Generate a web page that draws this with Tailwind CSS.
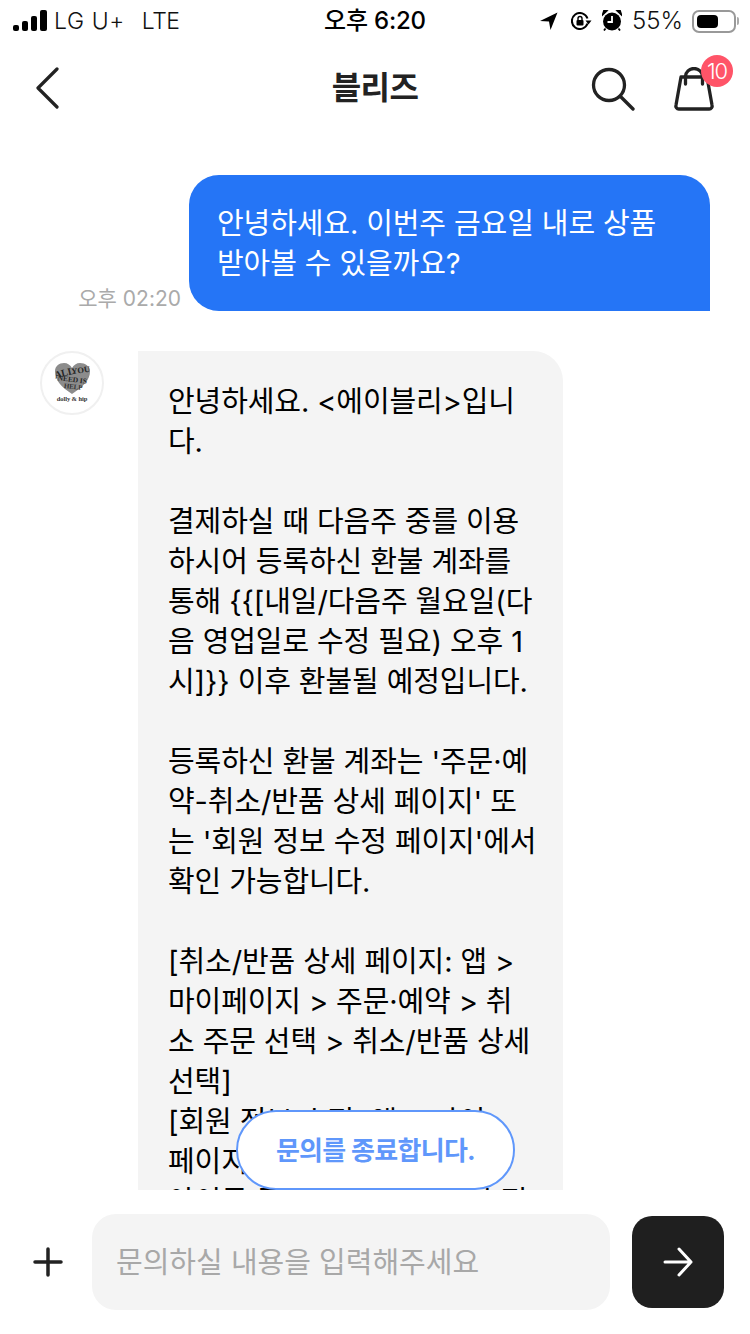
<!DOCTYPE html>
<html lang="ko">
<head>
  <meta charset="UTF-8">
  <meta name="viewport" content="width=device-width, initial-scale=1.0">
  <title>블리즈 문의</title>
  <script src="https://cdn.jsdelivr.net/npm/@tailwindcss/browser@4"></script>
</head>
<body class="bg-white font-['Inter','Noto_Sans_CJK_KR',sans-serif] text-black">
  <div class="relative w-[750px] h-[1334px] flex flex-col overflow-hidden">
    <!-- status bar -->
    <div class="h-[42px] shrink-0 relative flex items-center justify-between pl-[13px] pr-[11px] text-[24px] leading-none">
      <div class="flex items-center text-[#111]">
        <svg width="36" height="22" viewBox="0 0 36 22" fill="#000">
          <rect x="0" y="15" width="6" height="6" rx="2"/>
          <rect x="9" y="11" width="6" height="10" rx="2"/>
          <rect x="18" y="6" width="6" height="15" rx="2"/>
          <rect x="27" y="0" width="7" height="21" rx="2"/>
        </svg>
        <span class="ml-[5px] text-[23px] font-light tracking-[0.6px]">LG U+</span>
        <span class="ml-[17px] text-[23px] font-light tracking-[-0.5px]">LTE</span>
      </div>
      <div class="absolute left-[324px] top-[9px] font-medium text-[24px] tracking-[-0.2px]">오후 6:20</div>
      <div class="flex items-center">
        <svg width="18" height="18" viewBox="0 0 18 18" fill="#000"><path d="M17.500.5 0 9l9 .5 1.500 8.500z"/></svg>
        <svg class="ml-[13px]" width="21" height="18" viewBox="0 0 21 18" fill="none" stroke="#000" stroke-width="2">
          <path d="M16.500 11.500A8 8 0 1 1 16.500 6.500"/>
          <path d="M14.500 8.500h6l-3 4z" fill="#000" stroke="none"/>
          <rect x="5.500" y="8" width="7" height="5.500" rx="1" fill="#000" stroke="none"/>
          <path d="M7 8V6.500a2 2 0 0 1 4 0V8" stroke-width="1.400"/>
        </svg>
        <svg class="ml-[10px] mt-[-2px]" width="20" height="21" viewBox="0 0 20 21">
          <circle cx="10" cy="11.500" r="9" fill="#000"/>
          <path d="M10 6v6H5.500" stroke="#fff" stroke-width="1.800" fill="none"/>
          <path d="M.5 5 5 .8 2 .3zM19.500 5 15 .8l3-.5z" stroke="#000" stroke-width="1.500" fill="#000"/>
          <path d="m3.500 18.500-1.500 2M16.500 18.500l1.500 2" stroke="#000" stroke-width="1.800"/>
        </svg>
        <span class="ml-[10px] text-[24px] text-[#111] font-light">55%</span>
        <div class="ml-[9px] w-[44px] h-[23px] rounded-[7px] border-2 border-[#999] p-[3px]">
          <div class="w-[21px] h-full rounded-[4px] bg-black"></div>
        </div>
        <div class="ml-[1px] w-[2px] h-[8px] rounded-r bg-[#aaa]"></div>
      </div>
    </div>

    <!-- header -->
    <header class="h-[92px] shrink-0 relative flex items-center justify-between pl-[36px] pr-[35px]">
      <svg width="23" height="42" viewBox="0 0 23 42" fill="none" stroke="#222" stroke-width="3.200" stroke-linecap="round" stroke-linejoin="round"><path d="M21 2 2 21l19 19"/></svg>
      <div class="absolute left-0 right-0 text-center text-[32px] font-bold text-[#222] tracking-[-0.6px]">블리즈</div>
      <div class="flex items-center gap-[38px]">
        <svg class="mt-[2px]" width="44" height="44" viewBox="0 0 44 44" fill="none" stroke="#222" stroke-width="3.300" stroke-linecap="round"><circle cx="18" cy="18" r="15.500"/><path d="m29.500 29.500 12.500 12.500"/></svg>
        <div class="relative mt-[2px]">
          <svg width="42" height="44" viewBox="0 0 42 44" fill="none" stroke="#222" stroke-width="3.300" stroke-linecap="round" stroke-linejoin="round">
            <path d="M8 10h26l5 28a3 3 0 0 1-3 4H6a3 3 0 0 1-3-4z"/>
            <path d="M12.500 17V9.500a8.500 8 0 0 1 17 0V17"/>
          </svg>
          <div class="absolute left-[28px] top-[-12px] w-[32px] h-[32px] rounded-full bg-[#ff5468] text-white text-[22px] leading-[32px] text-center tracking-[-1px] font-light">10</div>
        </div>
      </div>
    </header>

    <!-- messages -->
    <main class="flex-1 overflow-hidden pt-[41px] text-[29px] leading-[40px] tracking-[-0.1px]">
      <div class="flex justify-end items-end gap-[8px] pr-[40px]">
        <span class="text-[21px] leading-[24px] text-[#aaa] tracking-normal">오후 02:20</span>
        <div class="w-[521px] bg-[#2575f6] text-white rounded-[30px] rounded-br-none pl-[28px] pr-[20px] pt-[29px] pb-[27px]">
          안녕하세요. 이번주 금요일 내로 상품<br>받아볼 수 있을까요?
        </div>
      </div>
      <div class="flex items-start mt-[40px] pl-[40px]">
        <div class="w-[64px] h-[64px] shrink-0 rounded-full border-2 border-[#f0f0f0]">
          <svg width="60" height="60" viewBox="0 0 60 60">
            <path d="M30 41C19 34 13 27 13 18.500 13 13 17 10 22 10c3.500 0 6.500 2 8 5 1.500-3 4.500-5 8-5 5 0 10 3 10 8.500C48 27 41 34 30 41z" fill="#8c8c8c"/>
            <text x="23" y="23" text-anchor="middle" font-size="10" font-weight="700" fill="#262626" font-family="Liberation Serif" transform="rotate(-14 23 23)">ALL</text>
            <text x="39" y="20" text-anchor="middle" font-size="8.500" font-weight="700" fill="#262626" font-family="Liberation Serif" transform="rotate(-8 39 20)">YOU</text>
            <text x="30" y="29" text-anchor="middle" font-size="7.500" font-weight="700" fill="#262626" font-family="Liberation Serif" transform="rotate(7 30 29)">NEED IS</text>
            <text x="31" y="36" text-anchor="middle" font-size="7" font-weight="700" fill="#333" font-family="Liberation Serif" transform="rotate(6 31 36)">HELP</text>
            <text x="30" y="48" text-anchor="middle" font-size="6.500" font-weight="700" fill="#333" font-family="Liberation Serif">dolly &amp; hip</text>
          </svg>
        </div>
        <div class="ml-[34px] w-[425px] bg-[#f4f4f4] rounded-[30px] rounded-tl-none pl-[30px] pr-[15px] pt-[31px] pb-[30px] whitespace-nowrap">
          안녕하세요. &lt;에이블리&gt;입니<br>다.<br><br>
          결제하실 때 다음주 중를 이용<br>하시어 등록하신 환불 계좌를<br>통해 {{[내일/다음주 월요일(다<br>음 영업일로 수정 필요) 오후 1<br>시]}} 이후 환불될 예정입니다.<br><br>
          등록하신 환불 계좌는 '주문·예<br>약-취소/반품 상세 페이지' 또<br>는 '회원 정보 수정 페이지'에서<br>확인 가능합니다.<br><br>
          [취소/반품 상세 페이지: 앱 &gt;<br>마이페이지 &gt; 주문·예약 &gt; 취<br>소 주문 선택 &gt; 취소/반품 상세<br>선택]<br>
          [회원 정보 수정: 앱 &gt; 마이<br>페이지 &gt; 회원 정보 수정.<br>아이콘 클릭 후 계좌 정보 수정
        </div>
      </div>
    </main>

    <!-- close inquiry pill -->
    <button class="absolute left-[236px] top-[1110px] w-[279px] h-[80px] rounded-full bg-white border-2 border-[#5f97fb] text-[#5f97fb] text-[26px] font-bold tracking-[-0.7px]">문의를 종료합니다.</button>

    <!-- input bar -->
    <footer class="h-[144px] shrink-0 flex items-start pl-[33px] pt-[24px]">
      <svg class="mt-[33px]" width="30" height="30" viewBox="0 0 30 30" stroke="#222" stroke-width="3.500" stroke-linecap="round"><path d="M15 2v26M2 15h26"/></svg>
      <div class="ml-[29px] w-[518px] h-[96px] rounded-[24px] bg-[#f4f4f4] flex items-center pl-[24px] pt-[2px] text-[29px] text-[#a8a8a8]">문의하실 내용을 입력해주세요</div>
      <div class="ml-[22px] mt-[2px] w-[92px] h-[92px] rounded-[20px] bg-[#1f1f1f] flex items-center justify-center">
        <svg width="30" height="30" viewBox="0 0 30 30" fill="none" stroke="#fff" stroke-width="3" stroke-linecap="round" stroke-linejoin="round"><path d="M2 15h26M16 2l12 13-12 13"/></svg>
      </div>
    </footer>
  </div>
</body>
</html>
